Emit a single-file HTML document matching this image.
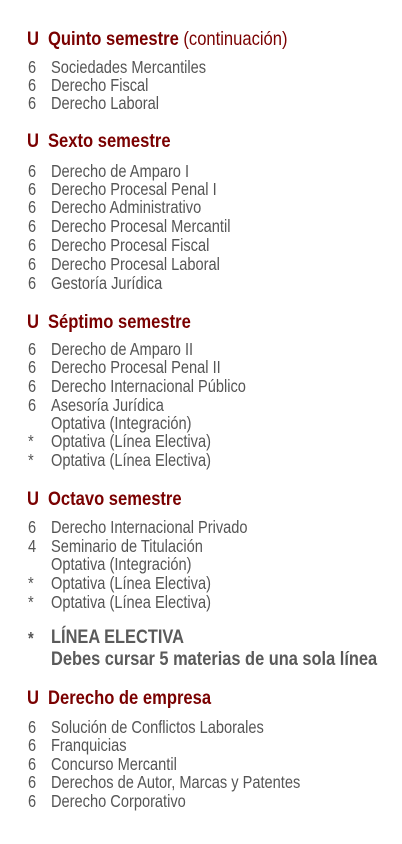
<!DOCTYPE html>
<html><head><meta charset="utf-8"><style>
body{margin:0;width:402px;height:844px;background:#fff;position:relative;overflow:hidden;font-family:"Liberation Sans",Arial,sans-serif;}
.l{position:absolute;white-space:nowrap;transform:scaleX(0.85);transform-origin:0 50%;line-height:20px;height:20px}
.n{left:28px;font-size:17.2px;color:#555}
.t{left:51px;font-size:17.2px;color:#555}
.h{font-size:19.5px;font-weight:bold;color:#7a0000}
.hu{left:27px}
.ht{left:48px}
.hn{font-weight:normal}
.e{left:51px;font-size:19.3px;font-weight:bold;color:#5a5a5a}
</style></head><body>
<div class="l h hu" style="top:29px">U</div><div class="l h ht" style="top:29px">Quinto semestre <span class="hn">(continuación)</span></div>
<div class="l n" style="top:57px">6</div><div class="l t" style="top:57px">Sociedades Mercantiles</div>
<div class="l n" style="top:75px">6</div><div class="l t" style="top:75px">Derecho Fiscal</div>
<div class="l n" style="top:93px">6</div><div class="l t" style="top:93px">Derecho Laboral</div>

<div class="l h hu" style="top:131px">U</div><div class="l h ht" style="top:131px">Sexto semestre</div>
<div class="l n" style="top:161px">6</div><div class="l t" style="top:161px">Derecho de Amparo I</div>
<div class="l n" style="top:179px">6</div><div class="l t" style="top:179px">Derecho Procesal Penal I</div>
<div class="l n" style="top:197px">6</div><div class="l t" style="top:197px">Derecho Administrativo</div>
<div class="l n" style="top:216px">6</div><div class="l t" style="top:216px">Derecho Procesal Mercantil</div>
<div class="l n" style="top:235px">6</div><div class="l t" style="top:235px">Derecho Procesal Fiscal</div>
<div class="l n" style="top:254px">6</div><div class="l t" style="top:254px">Derecho Procesal Laboral</div>
<div class="l n" style="top:273px">6</div><div class="l t" style="top:273px">Gestoría Jurídica</div>

<div class="l h hu" style="top:312px">U</div><div class="l h ht" style="top:312px">Séptimo semestre</div>
<div class="l n" style="top:339px">6</div><div class="l t" style="top:339px">Derecho de Amparo II</div>
<div class="l n" style="top:357px">6</div><div class="l t" style="top:357px">Derecho Procesal Penal II</div>
<div class="l n" style="top:376px">6</div><div class="l t" style="top:376px">Derecho Internacional Público</div>
<div class="l n" style="top:395px">6</div><div class="l t" style="top:395px">Asesoría Jurídica</div>
<div class="l t" style="top:413px">Optativa (Integración)</div>
<div class="l n" style="top:431px">*</div><div class="l t" style="top:431px">Optativa (Línea Electiva)</div>
<div class="l n" style="top:450px">*</div><div class="l t" style="top:450px">Optativa (Línea Electiva)</div>

<div class="l h hu" style="top:489px">U</div><div class="l h ht" style="top:489px">Octavo semestre</div>
<div class="l n" style="top:517px">6</div><div class="l t" style="top:517px">Derecho Internacional Privado</div>
<div class="l n" style="top:536px">4</div><div class="l t" style="top:536px">Seminario de Titulación</div>
<div class="l t" style="top:554px">Optativa (Integración)</div>
<div class="l n" style="top:573px">*</div><div class="l t" style="top:573px">Optativa (Línea Electiva)</div>
<div class="l n" style="top:592px">*</div><div class="l t" style="top:592px">Optativa (Línea Electiva)</div>

<div class="l n" style="top:628px;font-weight:bold">*</div><div class="l e" style="top:628px">LÍNEA ELECTIVA</div>
<div class="l e" style="top:650px">Debes cursar 5 materias de una sola línea</div>

<div class="l h hu" style="top:688px">U</div><div class="l h ht" style="top:688px">Derecho de empresa</div>
<div class="l n" style="top:717px">6</div><div class="l t" style="top:717px">Solución de Conflictos Laborales</div>
<div class="l n" style="top:735px">6</div><div class="l t" style="top:735px">Franquicias</div>
<div class="l n" style="top:754px">6</div><div class="l t" style="top:754px">Concurso Mercantil</div>
<div class="l n" style="top:772px">6</div><div class="l t" style="top:772px">Derechos de Autor, Marcas y Patentes</div>
<div class="l n" style="top:791px">6</div><div class="l t" style="top:791px">Derecho Corporativo</div>
</body></html>
